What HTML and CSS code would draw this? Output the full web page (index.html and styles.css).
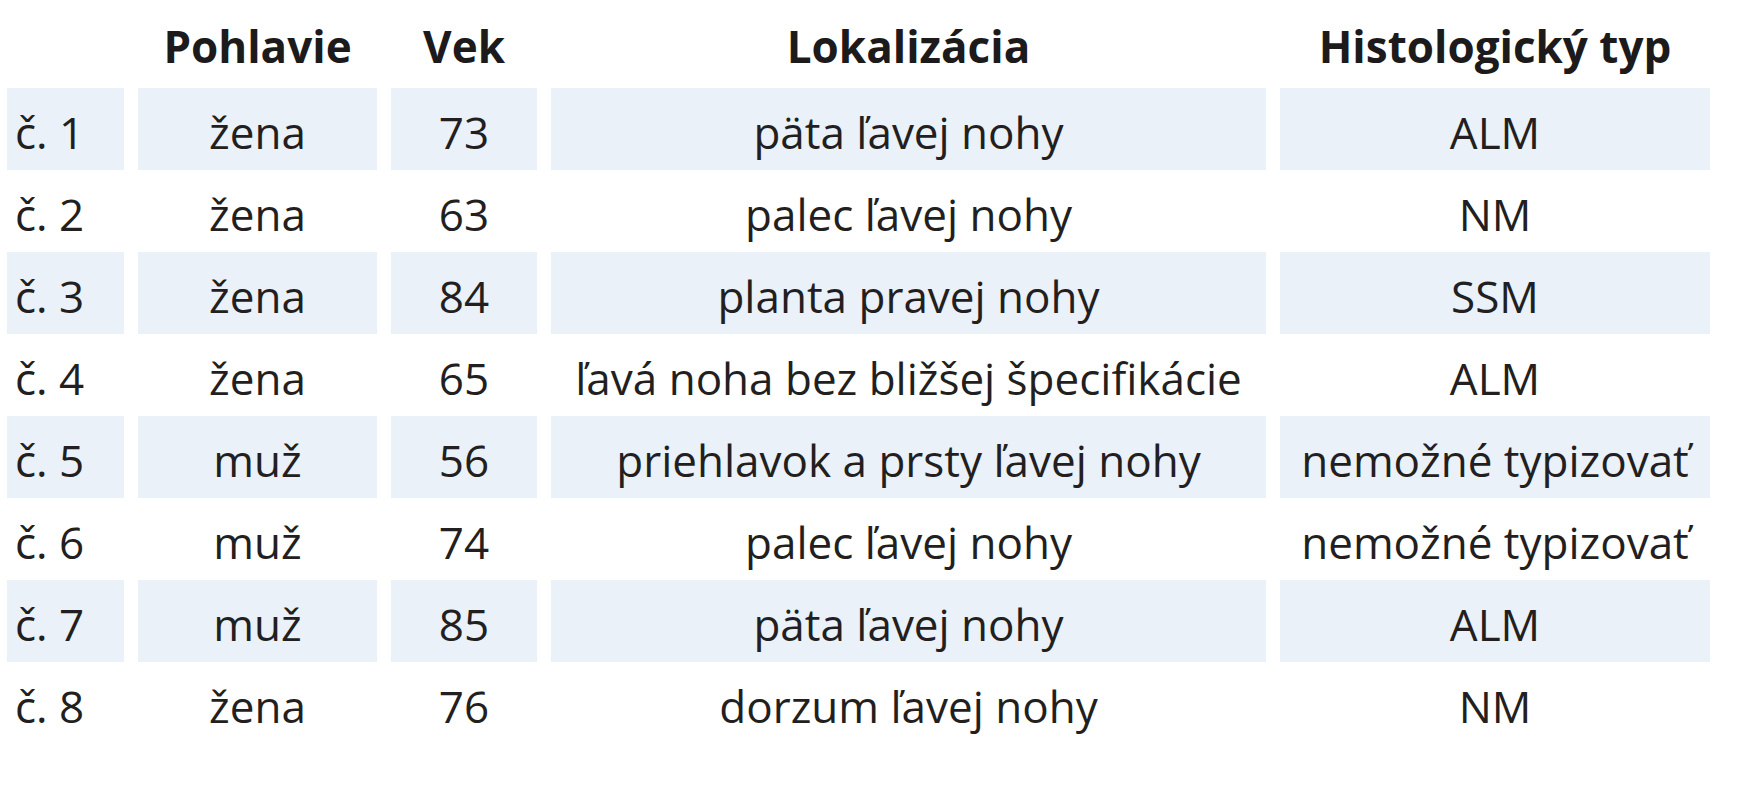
FILE: index.html
```html
<!DOCTYPE html>
<html lang="sk">
<head>
<meta charset="utf-8">
<title>Tabuľka pacientov</title>
<link rel="stylesheet" href="styles.css">
</head>
<body>
<table class="data">
  <colgroup>
    <col class="c-id">
    <col class="c-sex">
    <col class="c-age">
    <col class="c-loc">
    <col class="c-type">
  </colgroup>
  <thead>
    <tr>
      <th class="left"></th>
      <th>Pohlavie</th>
      <th>Vek</th>
      <th>Lokalizácia</th>
      <th>Histologický typ</th>
    </tr>
  </thead>
  <tbody>
    <tr class="shade"><td class="left">č. 1</td><td>žena</td><td>73</td><td>päta ľavej nohy</td><td>ALM</td></tr>
    <tr><td class="left">č. 2</td><td>žena</td><td>63</td><td>palec ľavej nohy</td><td>NM</td></tr>
    <tr class="shade"><td class="left">č. 3</td><td>žena</td><td>84</td><td>planta pravej nohy</td><td>SSM</td></tr>
    <tr><td class="left">č. 4</td><td>žena</td><td>65</td><td>ľavá noha bez bližšej špecifikácie</td><td>ALM</td></tr>
    <tr class="shade"><td class="left">č. 5</td><td>muž</td><td>56</td><td>priehlavok a prsty ľavej nohy</td><td>nemožné typizovať</td></tr>
    <tr><td class="left">č. 6</td><td>muž</td><td>74</td><td>palec ľavej nohy</td><td>nemožné typizovať</td></tr>
    <tr class="shade"><td class="left">č. 7</td><td>muž</td><td>85</td><td>päta ľavej nohy</td><td>ALM</td></tr>
    <tr><td class="left">č. 8</td><td>žena</td><td>76</td><td>dorzum ľavej nohy</td><td>NM</td></tr>
  </tbody>
</table>
</body>
</html>
```

FILE: styles.css
```css
html, body {
  margin: 0;
  padding: 0;
  background: #ffffff;
}

body {
  font-family: "Open Sans", "Noto Sans", "DejaVu Sans", sans-serif;
  color: #231f20;
}

.data {
  border-collapse: separate;
  border-spacing: 14px 0;
  margin-left: -7px;
  table-layout: fixed;
  width: 1731px;
}

.c-id { width: 117px; }
.c-sex { width: 239px; }
.c-age { width: 146px; }
.c-loc { width: 715px; }
.c-type { width: 430px; }

.data th,
.data td {
  font-size: 44px;
  line-height: 60px;
  text-align: center;
  white-space: nowrap;
  vertical-align: top;
}

.data th {
  font-weight: 700;
  color: #1c1a1b;
  padding: 16px 0 12px;
}

.data td {
  font-weight: 400;
  padding: 14px 0 8px;
}

.data .left {
  text-align: left;
  padding-left: 8px;
}

.data tr.shade td {
  background: #eaf1f9;
}
```
